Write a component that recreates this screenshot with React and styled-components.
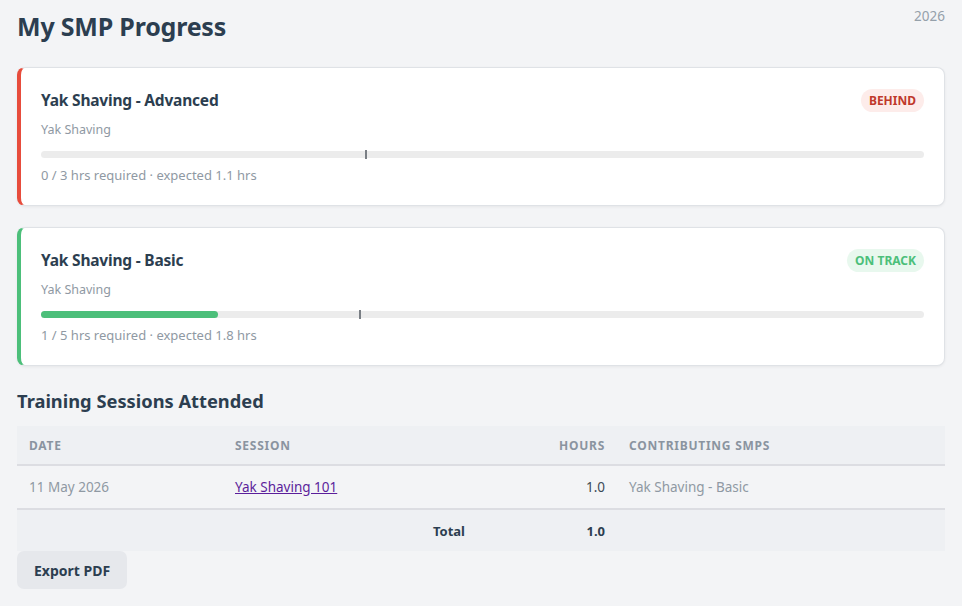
import React from "react"
import styled, { createGlobalStyle } from "styled-components"

const GlobalStyle = createGlobalStyle`
  html, body {
    margin: 0;
    padding: 0;
    background: #f3f4f6;
  }
  body {
    font-family: "Noto Sans", "Open Sans", sans-serif;
    color: #2c3e50;
  }
`

const Page = styled.div`
  padding: 0 17px 17px;
  position: relative;
`

const Year = styled.div`
  position: absolute;
  top: 7px;
  right: 17px;
  font-size: 13.5px;
  color: #95a0aa;
`

const Title = styled.h1`
  margin: 0;
  padding-top: 9px;
  font-size: 25px;
  font-weight: 700;
  line-height: 34px;
  color: #2c3e50;
  letter-spacing: -0.2px;
`

const Cards = styled.div`
  display: flex;
  flex-direction: column;
  gap: 21px;
  margin-top: 24px;
`

const Card = styled.div`
  background: #fff;
  border-radius: 8px;
  border: 1px solid #dfe2e6;
  border-left: 4px solid ${p => p.$accent};
  box-shadow: 0 1px 3px rgba(0, 0, 0, 0.06);
  padding: 20px;
  height: 139px;
  box-sizing: border-box;
`

const CardHead = styled.div`
  display: flex;
  align-items: center;
  justify-content: space-between;
  height: 24px;
`

const CardTitle = styled.div`
  font-size: 15.5px;
  font-weight: 700;
  color: #2c3e50;
  letter-spacing: -0.2px;
`

const Badge = styled.span`
  font-size: 12px;
  font-weight: 700;
  padding: 0 8px;
  height: 23px;
  line-height: 23px;
  border-radius: 12px;
  background: ${p => p.$bg};
  color: ${p => p.$fg};
`

const Sub = styled.div`
  margin-top: 9px;
  font-size: 12.5px;
  color: #8f99a3;
  line-height: 18px;
`

const Track = styled.div`
  position: relative;
  margin-top: 12px;
  height: 7px;
  border-radius: 4px;
  background: #ececec;
`

const Fill = styled.div`
  height: 100%;
  border-radius: 4px;
  background: #4cbf7a;
`

const Marker = styled.div`
  position: absolute;
  top: -1px;
  width: 2px;
  height: 9px;
  background: #7a7f85;
`

const Meta = styled.div`
  margin-top: 8px;
  font-size: 13px;
  color: #8f99a3;
  line-height: 18px;
`

const SectionTitle = styled.h2`
  margin: 23px 0 0;
  font-size: 18.3px;
  font-weight: 700;
  line-height: 24px;
  color: #2c3e50;
`

const Table = styled.table`
  margin-top: 13px;
  width: 100%;
  border-collapse: collapse;
  font-size: 13.5px;
`

const Th = styled.th`
  background: #eef0f3;
  height: 38px;
  padding: 0 12px;
  text-align: ${p => p.$align || "left"};
  font-size: 12px;
  font-weight: 700;
  letter-spacing: 0.75px;
  text-transform: uppercase;
  color: #8a94a0;
  border-bottom: 2px solid #dcdde2;
`

const Td = styled.td`
  height: 42px;
  padding: 0 12px;
  text-align: ${p => p.$align || "left"};
  color: ${p => p.$color || "#8f99a3"};
  border-bottom: 2px solid #dcdde2;
`

const TotalTd = styled.td`
  background: #eef0f3;
  height: 41px;
  padding: 0 12px;
  text-align: ${p => p.$align || "left"};
  font-weight: 700;
  font-size: 13px;
  color: #2c3e50;
`

const SessionLink = styled.a`
  color: #5b1e9b;
  text-decoration: underline;
`

const Button = styled.button`
  margin-top: 0;
  font-family: inherit;
  font-size: 14px;
  font-weight: 700;
  color: #2c3e50;
  background: #e6e8ec;
  border: none;
  border-radius: 7px;
  height: 38px;
  padding: 0 17px;
`

const smps = [
  { name: "Yak Shaving - Advanced", cat: "Yak Shaving", done: 0, req: 3, exp: 1.1, status: "behind" },
  { name: "Yak Shaving - Basic", cat: "Yak Shaving", done: 1, req: 5, exp: 1.8, status: "ok" },
]

const statusStyle = {
  behind: { accent: "#e74c3c", bg: "#fdecea", fg: "#c0392b", label: "BEHIND" },
  ok: { accent: "#4cbf7a", bg: "#e8f8ee", fg: "#4cbf7a", label: "ON TRACK" },
}

export default function App() {
  return (
    <>
      <GlobalStyle />
      <Page>
        <Year>2026</Year>
        <Title>My SMP Progress</Title>
        <Cards>
          {smps.map(s => {
            const st = statusStyle[s.status]
            return (
              <Card key={s.name} $accent={st.accent}>
                <CardHead>
                  <CardTitle>{s.name}</CardTitle>
                  <Badge $bg={st.bg} $fg={st.fg}>{st.label}</Badge>
                </CardHead>
                <Sub>{s.cat}</Sub>
                <Track>
                  <Fill style={{ width: `${(s.done / s.req) * 100}%` }} />
                  <Marker style={{ left: `${(s.exp / s.req) * 100}%` }} />
                </Track>
                <Meta>{s.done} / {s.req} hrs required · expected {s.exp} hrs</Meta>
              </Card>
            )
          })}
        </Cards>
        <SectionTitle>Training Sessions Attended</SectionTitle>
        <Table>
          <colgroup>
            <col style={{ width: 206 }} />
            <col />
            <col style={{ width: 140 }} />
            <col style={{ width: 328 }} />
          </colgroup>
          <thead>
            <tr>
              <Th>Date</Th>
              <Th>Session</Th>
              <Th $align="right">Hours</Th>
              <Th>Contributing SMPs</Th>
            </tr>
          </thead>
          <tbody>
            <tr>
              <Td>11 May 2026</Td>
              <Td><SessionLink href="#">Yak Shaving 101</SessionLink></Td>
              <Td $align="right" $color="#3d4a57">1.0</Td>
              <Td>Yak Shaving - Basic</Td>
            </tr>
          </tbody>
          <tfoot>
            <tr>
              <TotalTd />
              <TotalTd $align="right">Total</TotalTd>
              <TotalTd $align="right">1.0</TotalTd>
              <TotalTd />
            </tr>
          </tfoot>
        </Table>
        <Button>Export PDF</Button>
      </Page>
    </>
  )
}
